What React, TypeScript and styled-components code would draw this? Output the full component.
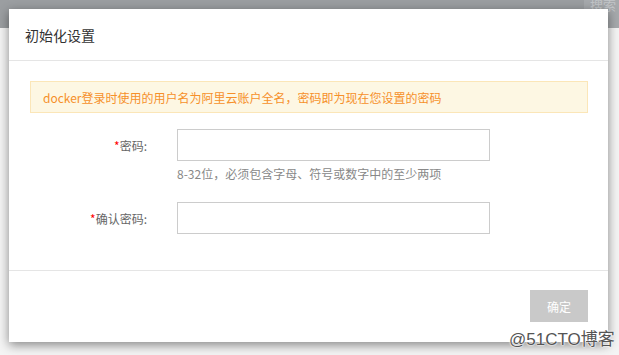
import React from "react";
import styled, { createGlobalStyle } from "styled-components";

const GlobalStyle = createGlobalStyle`
  html, body {
    margin: 0;
    padding: 0;
    width: 619px;
    height: 355px;
    overflow: hidden;
    background: #f4f4f4;
    font-family: "Noto Sans CJK SC", "Liberation Sans", sans-serif;
  }
`;

const Page = styled.div`
  position: relative;
  width: 619px;
  height: 355px;
  overflow: hidden;
`;

const TopBar = styled.div`
  height: 28px;
  background: #9b9ea1;
  display: flex;
  justify-content: flex-end;
`;

const SearchBox = styled.div`
  width: 29px;
  height: 28px;
  background: #a6a9ac;
  color: #c3c6c9;
  font-size: 13px;
  line-height: 10px;
  overflow: hidden;
  padding-left: 6px;
`;

const Dialog = styled.div`
  position: absolute;
  left: 9px;
  top: 9px;
  width: 599px;
  height: 333px;
  background: #fff;
  box-shadow: 0 3px 10px rgba(0, 0, 0, 0.45);
  display: flex;
  flex-direction: column;
`;

const Header = styled.div`
  height: 51px;
  border-bottom: 1px solid #e5e5e5;
  display: flex;
  align-items: center;
  padding: 0 16px;
  font-size: 14px;
  color: #333;
`;

const Body = styled.div`
  padding: 20px 20px 36px 21px;
  border-bottom: 1px solid #e5e5e5;
`;

const Alert = styled.div`
  height: 32px;
  box-sizing: border-box;
  border: 1px solid #fbe6b8;
  background: #fdf7e3;
  color: #f6902a;
  font-size: 12px;
  display: flex;
  align-items: center;
  padding-left: 12px;
  margin-bottom: 16px;
`;

const Row = styled.div<{ $gap?: number }>`
  display: grid;
  grid-template-columns: 117px 313px;
  column-gap: 30px;
  margin-bottom: ${(p) => p.$gap ?? 0}px;
`;

const Label = styled.label`
  height: 32px;
  display: flex;
  align-items: center;
  justify-content: flex-end;
  font-size: 12px;
  color: #666;
`;

const Star = styled.span`
  color: #f00;
`;

const Field = styled.div`
  display: flex;
  flex-direction: column;
`;

const Input = styled.input`
  height: 32px;
  box-sizing: border-box;
  border: 1px solid #cccccc;
  outline: none;
  padding: 0 8px;
  font-size: 12px;
`;

const Hint = styled.div`
  margin-top: 4px;
  font-size: 12px;
  line-height: 18px;
  color: #888;
`;

const Footer = styled.div`
  flex: 1;
  display: flex;
  justify-content: flex-end;
  align-items: flex-start;
  padding: 19px 20px 0;
`;

const Button = styled.button`
  width: 58px;
  height: 32px;
  border: none;
  background: #c9c9c9;
  color: #fff;
  font-size: 12px;
  font-family: inherit;
  padding: 0;
`;

const Watermark = styled.div`
  position: absolute;
  left: 509px;
  top: 325px;
  font-size: 17px;
  color: #555;
  white-space: nowrap;
  text-shadow: 0 0 2px #fff, 0 0 2px #fff, 0 0 1px #fff;
  font-family: "Liberation Sans", "Noto Sans CJK SC", sans-serif;
`;

export default function App() {
  return (
    <Page>
      <GlobalStyle />
      <TopBar>
        <SearchBox>搜索</SearchBox>
      </TopBar>
      <Dialog>
        <Header>初始化设置</Header>
        <Body>
          <Alert>docker登录时使用的用户名为阿里云账户全名，密码即为现在您设置的密码</Alert>
          <Row $gap={19}>
            <Label>
              <Star>*</Star>密码:
            </Label>
            <Field>
              <Input type="password" />
              <Hint>8-32位，必须包含字母、符号或数字中的至少两项</Hint>
            </Field>
          </Row>
          <Row>
            <Label>
              <Star>*</Star>确认密码:
            </Label>
            <Field>
              <Input type="password" />
            </Field>
          </Row>
        </Body>
        <Footer>
          <Button>确定</Button>
        </Footer>
      </Dialog>
      <Watermark>@51CTO博客</Watermark>
    </Page>
  );
}
